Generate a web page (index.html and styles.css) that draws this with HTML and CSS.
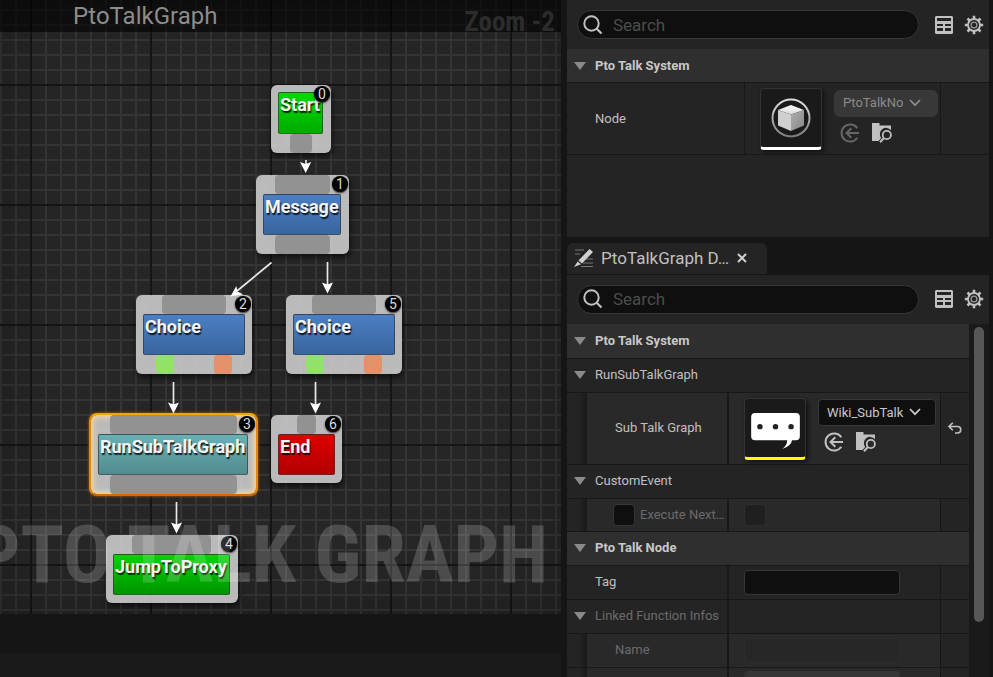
FILE: index.html
```
<!DOCTYPE html>
<html lang="en">
<head>
<meta charset="utf-8">
<meta name="viewport" content="width=device-width, initial-scale=1">
<title>PtoTalkGraph</title>
<link rel="stylesheet" href="styles.css">
</head>
<body>
<svg class="defs" aria-hidden="true">
  <defs>
    <linearGradient id="ring" x1="0" y1="0" x2="0" y2="1"><stop offset="0" stop-color="#dedede"/><stop offset="1" stop-color="#7c7c7c"/></linearGradient>
    <linearGradient id="cubeTop" x1="0" y1="0" x2="0" y2="1"><stop offset="0" stop-color="#fff"/><stop offset="1" stop-color="#d8d8d8"/></linearGradient>
    <linearGradient id="cubeSide" x1="0" y1="0" x2="1" y2="1"><stop offset="0" stop-color="#b0b0b0"/><stop offset="1" stop-color="#858585"/></linearGradient>
    <symbol id="search" viewBox="0 0 20 20"><circle cx="8.500" cy="8.500" r="7.200" fill="none" stroke="currentColor" stroke-width="2"/><path d="M13.500 13.500 18.500 18.500" stroke="currentColor" stroke-width="2.200"/></symbol>
    <symbol id="table" viewBox="0 0 18 18"><path fill="currentColor" fill-rule="evenodd" d="M1 0h16l1 1v16l-1 1H1l-1-1V1zM2 2v3h14V2zM2 8v2h6V8zM10 8v2h6V8zM2 12v3h6v-3zM10 12v3h6v-3z"/></symbol>
    <symbol id="gear" viewBox="0 0 20 20"><g fill="none" stroke="currentColor"><circle cx="10" cy="10" r="6" stroke-width="1.800"/><circle cx="10" cy="10" r="2.900" stroke-width="1.300" opacity=".75"/><path stroke-width="2.600" d="M10 .8v3.600M10 15.600v3.600M.8 10h3.600M15.600 10h3.600M3.500 3.500l2.500 2.500M14 14l2.500 2.500M3.500 16.500 6 14M14 6l2.500-2.500"/></g></symbol>
    <symbol id="chevron" viewBox="0 0 12 8"><path d="M1 1l5 5.200L11 1" fill="none" stroke="currentColor" stroke-width="1.800"/></symbol>
    <symbol id="use" viewBox="0 0 20 20"><path d="M17.300 5.200A8.600 8.600 0 1 0 17.300 14.800M19 10H6.500M11.300 5.200 6.500 10l4.800 4.800" fill="none" stroke="currentColor" stroke-width="2"/></symbol>
    <symbol id="browse" viewBox="0 0 20 20"><path fill="currentColor" d="M0 0h7.500v2.600H19v4.600A6.200 6.200 0 0 0 9.200 15L6.500 18H0z"/><circle cx="14.800" cy="12" r="4.100" fill="none" stroke="currentColor" stroke-width="1.800"/><path d="M11.900 15 8 19.200" stroke="currentColor" stroke-width="2"/></symbol>
    <symbol id="reset" viewBox="0 0 14 12"><path d="M4.800.8 1 4.500l3.800 3.700M1 4.500h8.500a3.200 3.200 0 0 1 0 6.500H7" fill="none" stroke="currentColor" stroke-width="1.600"/></symbol>
  </defs>
</svg>
<div class="editor">
  <main class="left">
    <section class="graph" aria-label="Graph">
      <div class="vignette"></div>
      <header class="graph-title"><h1>PtoTalkGraph</h1><span class="zoom">Zoom -2</span></header>

      <div class="node start"><span class="badge">0</span><div class="pins bare"></div><div class="body green">Start</div><div class="pins"><i class="pin"></i></div></div>
      <div class="node message"><span class="badge">1</span><div class="pins"><i class="pin"></i></div><div class="body blue">Message</div><div class="pins"><i class="pin"></i></div></div>
      <div class="node choice choice-a"><span class="badge">2</span><div class="pins"><i class="pin"></i></div><div class="body blue">Choice</div><div class="pins options"><i class="pin yes"></i><i class="pin no"></i></div></div>
      <div class="node choice choice-b"><span class="badge">5</span><div class="pins"><i class="pin"></i></div><div class="body blue">Choice</div><div class="pins options"><i class="pin yes"></i><i class="pin no"></i></div></div>
      <div class="node run selected"><span class="badge">3</span><div class="pins"><i class="pin"></i></div><div class="body teal">RunSubTalkGraph</div><div class="pins"><i class="pin"></i></div></div>
      <div class="node end"><span class="badge">6</span><div class="pins"><i class="pin"></i></div><div class="body red">End</div><div class="pins bare"></div></div>
      <div class="node jump"><span class="badge">4</span><div class="pins"><i class="pin"></i></div><div class="body green">JumpToProxy</div><div class="pins bare"></div></div>

      <svg class="wires" width="561" height="614" viewBox="0 0 561 614" aria-hidden="true">
        <g stroke="#e8e8e8" stroke-width="1.700">
          <path d="M306 160v6"/><path d="M271.500 262.500 237 291"/><path d="M327.500 262v24"/><path d="M173.500 382v24"/><path d="M315.500 382v24"/><path d="M176.500 502v24"/>
        </g>
        <g fill="#fff">
          <path d="M300 162l5.700 2 5.500-2-5.500 11z"/><path d="M230.500 296.500l5.800-10.500 1.200 5.500 5.800 3z"/><path d="M322 282.500l5.500 2 5.500-2-5.500 11z"/><path d="M168 402.500l5.500 2 5.500-2-5.500 11z"/><path d="M310 402.500l5.500 2 5.500-2-5.500 11z"/><path d="M171 522.500l5.500 2 5.500-2-5.500 11z"/>
        </g>
      </svg>
      <div class="watermark">PTO TALK GRAPH</div>
    </section>
    <section class="drawer"></section>
  </main>

  <aside class="right">
    <section class="panel upper">
      <div class="toolbar">
        <label class="search"><svg><use href="#search"/></svg><input type="search" placeholder="Search" aria-label="Search properties"></label>
        <button class="icon" aria-label="Property matrix"><svg class="i18"><use href="#table"/></svg></button>
        <button class="icon" aria-label="View options"><svg class="i20"><use href="#gear"/></svg></button>
      </div>
      <button class="category"><i class="arrow"></i>Pto Talk System</button>
      <div class="row tall wide">
        <label class="name" for="node-asset">Node</label>
        <div class="value asset">
          <div class="thumb white"><svg class="cube" viewBox="0 0 40 40"><circle cx="20" cy="20" r="18.500" fill="none" stroke="url(#ring)" stroke-width="2"/><path fill="url(#cubeTop)" d="M20 7 33 12 20 16.500 7 12z"/><path fill="#cfcfcf" d="M7 12 20 16.500V33L7 27.500z"/><path fill="url(#cubeSide)" d="M33 12 20 16.500V33l13-5.500z"/></svg></div>
          <div class="picker">
            <div class="combo disabled"><select id="node-asset" disabled><option>PtoTalkNo</option></select><svg><use href="#chevron"/></svg></div>
            <div class="actions"><button class="icon dim" disabled aria-label="Use selected asset"><svg class="i20"><use href="#use"/></svg></button><button class="icon" aria-label="Browse to asset"><svg class="i20"><use href="#browse"/></svg></button></div>
          </div>
        </div>
        <div class="tail"></div>
      </div>
    </section>

    <div class="tabs"><div class="tab">
      <svg class="pencil" viewBox="0 0 20 20"><path d="M1 2h9M1 6h5M12 11h7M9 15h10M7 18.500h12" stroke="#777" stroke-width="1"/><path fill="#d0d0d0" d="M15.500 1 19 4 8 15.500 4.500 12.500zM3.700 13.400 7 16.300 0 19z"/></svg>
      <span>PtoTalkGraph D…</span><button class="icon" aria-label="Close tab"><svg class="close" viewBox="0 0 10 10"><path d="M1 1l8 8M9 1 1 9" stroke="#d0d0d0" stroke-width="2"/></svg></button>
    </div></div>

    <section class="panel lower">
      <div class="toolbar">
        <label class="search"><svg><use href="#search"/></svg><input type="search" placeholder="Search" aria-label="Search details"></label>
        <button class="icon" aria-label="Property matrix"><svg class="i18"><use href="#table"/></svg></button>
        <button class="icon" aria-label="View options"><svg class="i20"><use href="#gear"/></svg></button>
      </div>
      <div class="scroller">
        <div class="rows">
          <button class="category first"><i class="arrow"></i>Pto Talk System</button>
          <button class="category group"><i class="arrow"></i>RunSubTalkGraph</button>
          <div class="row tall child">
            <i class="indent"></i>
            <label class="name" for="sub-asset">Sub Talk Graph</label>
            <div class="value asset">
              <div class="thumb yellow"><svg class="bubble" viewBox="0 0 50 38"><path fill="#fff" d="M4 0h42q4 0 4 4v20q0 4-4 4h-4q-1 6-10 9 5-4 5-9H4q-4 0-4-4V4q0-4 4-4z"/><g fill="#222"><circle cx="9" cy="14" r="2.800"/><circle cx="25" cy="14" r="2.800"/><circle cx="41" cy="14" r="2.800"/></g></svg></div>
              <div class="picker">
                <div class="combo"><select id="sub-asset"><option>Wiki_SubTalk</option></select><svg><use href="#chevron"/></svg></div>
                <div class="actions"><button class="icon" aria-label="Use selected asset"><svg class="i20"><use href="#use"/></svg></button><button class="icon" aria-label="Browse to asset"><svg class="i20"><use href="#browse"/></svg></button></div>
              </div>
            </div>
            <div class="tail"><button class="icon" aria-label="Reset to default"><svg class="reset"><use href="#reset"/></svg></button></div>
          </div>
          <button class="category group"><i class="arrow"></i>CustomEvent</button>
          <div class="row child short">
            <i class="indent"></i>
            <div class="name dim"><input type="checkbox" id="override"><label for="override">Execute Next…</label></div>
            <div class="value"><input type="checkbox" class="faded" disabled aria-label="Execute Next"></div>
            <div class="tail"></div>
          </div>
          <button class="category"><i class="arrow"></i>Pto Talk Node</button>
          <div class="row">
            <label class="name" for="tag">Tag</label>
            <div class="value"><input class="field" type="text" id="tag"></div>
            <div class="tail"></div>
          </div>
          <div class="row">
            <button class="name expand"><i class="arrow"></i>Linked Function Infos</button>
            <div class="value"></div>
            <div class="tail"></div>
          </div>
          <div class="row child">
            <i class="indent"></i>
            <label class="name dim" for="fn-name">Name</label>
            <div class="value"><input class="field faded" type="text" id="fn-name" disabled></div>
            <div class="tail"></div>
          </div>
          <div class="row child cut">
            <i class="indent"></i>
            <div class="name"></div>
            <div class="value"><button class="field raised" disabled aria-label="Function"></button></div>
            <div class="tail"></div>
          </div>
        </div>
        <div class="track"><div class="bar"></div></div>
      </div>
    </section>
  </aside>
</div>
</body>
</html>
```
FILE: styles.css
```
* { box-sizing: border-box; }

body {
  margin: 0;
  background: #151515;
  color: #c0c0c0;
  font: 13px/16px Roboto, "Liberation Sans", sans-serif;
  overflow: hidden;
}

button, input, select { font: inherit; color: inherit; }
.defs { position: absolute; width: 0; height: 0; }

.editor {
  display: grid;
  grid-template-columns: minmax(0, 561fr) minmax(0, 422fr);
  gap: 6px;
  height: 100vh;
  padding-right: 4px;
}

.left, .right { display: flex; flex-direction: column; min-height: 0; }

/* Graph canvas */
.graph {
  position: relative;
  flex: 1;
  overflow: hidden;
  background-color: #262626;
  background-image:
    linear-gradient(90deg, #151515 2px, transparent 2px),
    linear-gradient(#151515 2px, transparent 2px),
    linear-gradient(90deg, #353535 2px, transparent 2px),
    linear-gradient(#353535 2px, transparent 2px);
  background-size: 120px 120px, 120px 120px, 15px 15px, 15px 15px;
  background-position: 30px 84px, 30px 84px, 0 9px, 0 9px;
}

.vignette {
  position: absolute;
  inset: 0;
  box-shadow: inset 0 0 60px rgba(0, 0, 0, .3);
}

.graph-title {
  position: relative;
  display: flex;
  justify-content: space-between;
  height: 32px;
  padding: 0 6px 0 73px;
  background: rgba(0, 0, 0, .6);
}

.graph-title h1 { margin: 0; font-size: 24px; line-height: 32px; font-weight: 400; color: #8c8c8c; }

.zoom {
  font: 700 27px/44px "Roboto Condensed", "Liberation Sans Narrow", Roboto, sans-serif;
  color: #2c2c2c;
}

.drawer { height: 24px; margin-top: 39px; background: #1a1a1a; }

.node {
  position: absolute;
  padding: 0 8px 0 7px;
  border-radius: 6px;
  background: rgba(203, 203, 203, .9);
  box-shadow: 1px 3px 6px rgba(0, 0, 0, .65);
}

.start { left: 271px; top: 85px; width: 60px; }
.message { left: 256px; top: 175px; width: 93px; }
.choice { top: 295px; width: 116px; padding-right: 7px; }
.choice-a { left: 136px; }
.choice-b { left: 286px; }
.run { left: 91px; top: 415px; width: 165px; }
.end { left: 271px; top: 415px; width: 71px; padding-right: 7px; }
.jump { left: 106px; top: 535px; width: 132px; }

.selected {
  box-shadow: inset 0 0 5px 3px #efd3a0, 0 0 3px 2px #c86400;
}
.selected::after {
  content: "";
  position: absolute;
  inset: -2px;
  border: 2px solid #f0a800;
  border-bottom-color: #d26a00;
  border-left-color: #e28b00;
  border-right-color: #e28b00;
  border-radius: 8px;
}

.pins { display: flex; justify-content: center; height: 19px; }
.pins.bare { height: 8px; }
.start .bare { height: 7px; }
.pin { width: 100%; margin: 0 11px 0 12px; border-radius: 4px; background: #929292; }
.choice .pin, .jump .pin, .end .pin { margin: 0 19px; }
.choice .options { justify-content: space-between; padding: 0 13px; }
.choice .options .pin { width: 18px; margin: 0; }
.pin.yes { background: #92e26a; }
.pin.no { background: #e29169; }

.body {
  height: 41px;
  padding: 2px 0 0 1px;
  border: 1px solid rgba(50, 50, 50, .65);
  border-radius: 2px;
  color: #f4f4f4;
  font-size: 18px;
  line-height: 20px;
  font-weight: 700;
  white-space: nowrap;
  text-shadow: 1px 2px 1px rgba(0, 0, 0, .8);
}
.start .body { height: 42px; }
.green { background: linear-gradient(#00da00, #00ac00); }
.blue { background: linear-gradient(#4a7fc4, #3a659e); }
.teal { background: linear-gradient(#68b0b4, #528b8f); }
.red { background: linear-gradient(#de0000, #b20000); }
.jump .green { background: linear-gradient(#00d400, #009400); }

.badge {
  position: absolute;
  top: 1px;
  right: 1px;
  width: 16px;
  height: 16px;
  border-radius: 50%;
  background: #000;
  box-shadow: 0 1px 2px rgba(0, 0, 0, .8);
  color: #ddd;
  font-size: 14px;
  line-height: 16px;
  text-align: center;
}

.wires { position: absolute; top: 0; left: 0; }

.watermark {
  position: absolute;
  right: 13px;
  bottom: 12px;
  color: rgba(255, 255, 255, .18);
  font: 700 80px/94px "Roboto Condensed", "Liberation Sans Narrow", Roboto, sans-serif;
  white-space: nowrap;
}

/* Details panels */
.panel { background: #242424; overflow: hidden; }
.upper { flex: 0 0 35vh; }
.lower { flex: 1; min-height: 0; display: flex; flex-direction: column; }

.toolbar { display: flex; flex-shrink: 0; align-items: center; height: 49px; padding: 0 5px 0 10px; }

.search {
  display: flex;
  flex: 1;
  align-items: center;
  gap: 10px;
  height: 29px;
  min-width: 0;
  margin-right: 16px;
  padding: 0 5px;
  border: 1px solid #363636;
  border-radius: 15px;
  background: #0f0f0f;
}
.search svg { width: 20px; height: 20px; flex-shrink: 0; }
.search input { flex: 1; min-width: 0; padding: 0; border: 0; outline: 0; background: none; font-size: 17px; line-height: 20px; }
.search input::placeholder { color: #4c4c4c; opacity: 1; }

.icon { display: flex; padding: 0; border: 0; background: none; color: #c0c0c0; }
.toolbar .icon + .icon { margin-left: 11px; }
.i18 { width: 18px; height: 18px; }
.i20 { width: 20px; height: 20px; }
.icon.dim { color: #666; }

.category {
  display: flex;
  align-items: center;
  width: 100%;
  height: 34px;
  padding: 0 7px;
  border: 0;
  border-bottom: 1px solid #181818;
  background: #2f2f2f;
  font-weight: 700;
  color: #c8c8c8;
}
.category.first { height: 35px; }
.category.group { background: #242424; font-weight: 400; color: #c0c0c0; }

.arrow {
  flex-shrink: 0;
  margin-right: 9px;
  border: 6px solid transparent;
  border-top: 8px solid #8a8a8a;
  border-bottom: 0;
}

.row { display: grid; grid-template-columns: 162px minmax(0, 1fr) 28px; min-height: 34px; border-bottom: 1px solid #181818; }
.row.child { grid-template-columns: 20px 142px minmax(0, 1fr) 28px; }
.row.wide { grid-template-columns: 178px minmax(0, 1fr) 48px; }
.row.tall { min-height: 72px; }
.row.short { min-height: 33px; }

.name { display: flex; align-items: center; min-width: 0; padding: 0 0 0 28px; border: 0; border-right: 2px solid #181818; background: #242424; white-space: nowrap; }
.wide .name { border-right-width: 1px; }
.name.dim, .expand { color: #6b6b6b; }
.expand { padding-left: 7px; }
.indent { background: linear-gradient(90deg, #242424 60%, #181818); }
.child .name, .child .value { background: #292929; }
.child .value { border-right: 1px solid #181818; }
div.name { gap: 5px; padding-left: 26px; }

.value { display: flex; align-items: center; min-width: 0; padding-left: 15px; border-right: 1px solid #181818; }
.tail { display: flex; align-items: center; justify-content: center; }
.reset { width: 14px; height: 12px; }

.asset { gap: 12px; padding-top: 1px; }
.thumb {
  display: flex;
  align-items: center;
  justify-content: center;
  flex-shrink: 0;
  width: 62px;
  height: 62px;
  border: 1px solid #333;
  border-bottom: 3px solid #fff;
  border-radius: 4px;
  background: #1a1a1a;
  box-shadow: 2px 2px 4px #111;
}
.thumb.yellow { border-bottom-color: #ff0; }
.cube { width: 40px; height: 40px; }
.bubble { width: 49px; height: 37px; margin-top: 8px; }

.picker { flex: 1; min-width: 0; padding-bottom: 6px; }
.combo {
  position: relative;
  height: 27px;
  margin-right: 4px;
  border: 1px solid #383838;
  border-radius: 4px;
  background: #0f0f0f;
  color: #c8c8c8;
}
.combo.disabled { margin-right: 2px; border-radius: 6px; background: #383838; color: #8a8a8a; }
.combo select { width: 100%; height: 100%; padding: 0 30px 0 8px; border: 0; outline: 0; appearance: none; background: none; opacity: 1; }
.combo svg { position: absolute; right: 14px; top: 8px; width: 12px; height: 8px; pointer-events: none; }
.combo.disabled svg { right: 16px; }
.actions { display: flex; gap: 12px; margin: 6px 0 0 6px; }

input[type="checkbox"] { flex-shrink: 0; width: 22px; height: 22px; margin: 0; appearance: none; border: 1px solid #363636; border-radius: 4px; background: #0f0f0f; }
input[type="checkbox"].faded { background: #1f1f1f; border-color: #2e2e2e; }

.field { width: 156px; height: 25px; padding: 0 6px; border: 1px solid #363636; border-radius: 4px; background: #0f0f0f; }
.field.faded { background: #272727; border-color: #2d2d2d; }
.field.raised { background: #363636; }
.cut .value { align-items: flex-start; padding-top: 3px; }

.tabs { display: flex; flex-shrink: 0; height: 38px; padding-top: 6px; }
.tab {
  display: flex;
  align-items: center;
  width: 200px;
  height: 31px;
  padding: 0 7px;
  border-radius: 6px 6px 0 0;
  background: #242424;
  font-size: 17px;
  line-height: 20px;
  white-space: nowrap;
}
.pencil { width: 20px; height: 20px; margin-right: 7px; flex-shrink: 0; }
.tab .icon { margin-left: 8px; }
.close { width: 10px; height: 10px; }

.scroller { display: flex; flex: 1; min-height: 0; overflow: hidden; background: #1a1a1a; }
.rows { flex: 1; min-width: 0; background: #242424; align-self: flex-start; }
.track { width: 20px; padding: 3px 5px; }
.bar { height: 85%; border-radius: 5px; background: #575757; }
```
